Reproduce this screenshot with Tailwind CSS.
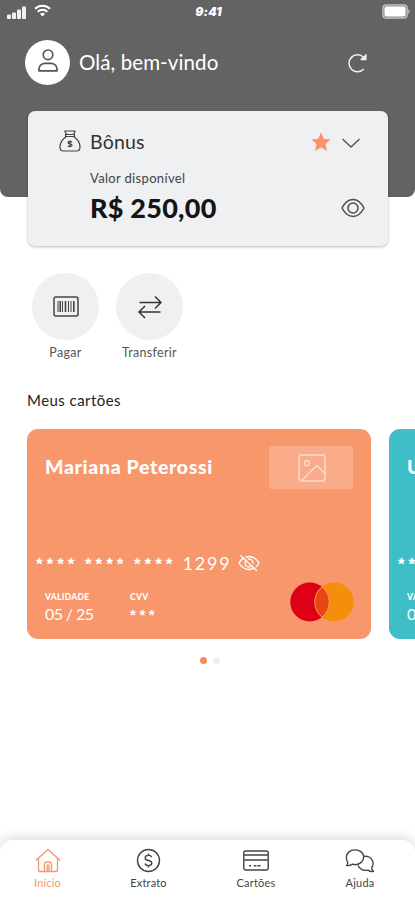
<!DOCTYPE html>
<html lang="pt-BR">
<head>
<meta charset="utf-8">
<meta name="viewport" content="width=device-width, initial-scale=1">
<title>Início</title>
<script src="https://cdn.jsdelivr.net/npm/@tailwindcss/browser@4"></script>
</head>
<body class="bg-white font-[Lato,sans-serif] text-[#333]">
<div class="flex flex-col w-[415px] h-[900px] overflow-hidden">

  <header class="h-[197px] shrink-0 rounded-b-[8px] bg-[#636363] text-white">
    <div class="grid grid-cols-3 items-center h-6 pl-[7px] pr-[5px]">
      <div class="flex items-center gap-2">
        <svg class="w-[19px] h-[13px]" viewBox="0 0 19 13" fill="#f0f0f0"><rect x="0" y="8.500" width="4" height="4.500" rx="1"/><rect x="5" y="6.500" width="4" height="6.500" rx="1"/><rect x="10" y="3.500" width="4" height="9.500" rx="1"/><rect x="15" y="0.500" width="4" height="12.500" rx="1"/></svg>
        <svg class="w-[17px] h-[13px] -mt-[3px]" viewBox="0 0 17 13" fill="none" stroke="#fff" stroke-width="2"><path d="M1 4.800a10.500 10.500 0 0 1 15 0"/><path d="M3.700 7.800a6.800 6.800 0 0 1 9.600 0"/><path d="M6 9.900a3.600 3.600 0 0 1 5 0L8.500 12.500z" fill="#fff" stroke="none"/></svg>
      </div>
      <span class="text-center text-[12px] leading-none font-black italic tracking-[0.2px] font-[Inter,sans-serif]">9:41</span>
      <svg class="justify-self-end w-[28px] h-[15px] -mt-[2px]" viewBox="0 0 28 15"><rect x="0.800" y="0.800" width="24.400" height="13.400" rx="3.500" fill="#909090" stroke="#c4c4c4" stroke-width="1.200"/><rect x="2.500" y="2.500" width="21" height="10" rx="2" fill="#fff"/><path d="M26.300 5v5q1.400-1 1.400-2.500T26.300 5" fill="#c4c4c4"/></svg>
    </div>
    <div class="flex items-center h-[45px] mt-[16px] pl-[25px] pr-[48px]">
      <div class="flex items-center justify-center size-[45px] rounded-full bg-white">
        <svg class="w-[20px] h-[23px] -mt-[5px]" viewBox="0 0 20 23" fill="none" stroke="#555" stroke-width="1.700"><circle cx="10" cy="5.800" r="4.800"/><path d="M1 21.800v-2C1 16.500 4 14.300 7 14.300h6c3 0 6 2.200 6 5.500v2z" stroke-linejoin="round"/></svg>
      </div>
      <h1 class="ml-[9px] -mt-[1px] text-[20.5px] leading-none tracking-[0.1px] whitespace-nowrap">Olá, bem-vindo</h1>
      <svg class="ml-auto w-[20px] h-[20px]" viewBox="0 0 20 20" fill="none" stroke="#f2f2f2" stroke-width="1.500"><path d="M16.800 16A8.500 8.500 0 1 1 16.500 4.200"/><path d="M18.800 1.200v5.200h-5.200"/><path d="M13.500 6.200 18.500 1.500v4.700z" fill="#f2f2f2" stroke="none"/></svg>
    </div>
  </header>

  <main class="flex flex-col -mt-[86px]">
    <section class="flex flex-col ml-[28px] mr-[27px] h-[135px] rounded-[7px] bg-[#eef0f2] pl-[31px] pr-[23px] shadow-[0_1px_3px_rgba(0,0,0,0.28)]">
      <div class="flex items-center h-[24px] mt-[19px]">
        <svg class="w-[22px] h-[22px] -mt-[2px]" viewBox="0 0 22 22" fill="none" stroke="#444" stroke-width="1.200" stroke-linejoin="round"><path d="M7.500 4.500 5.800 1h10.400L14.500 4.500M6.500 4.500h9v2h-9zM7.500 6.500C3.500 9 1 12.500 1 17c0 2.600 1.200 4 3.500 4h13c2.300 0 3.500-1.400 3.500-4 0-4.500-2.500-8-6.500-10.500"/><path d="M13 12c-1-1-4-.9-4 .6 0 1.700 4 .9 4 2.600 0 1.500-3 1.600-4.200.5M11 10.500v6.700"/></svg>
        <h2 class="ml-[9px] text-[19.5px] leading-none tracking-[0.2px]">Bônus</h2>
        <svg class="ml-auto w-[20px] h-[20px]" viewBox="0 0 20 20" fill="#f9946a"><path d="m10 .5 2.800 6.300 6.700.7-5 4.600 1.500 6.800-6-3.500-6 3.500 1.500-6.800-5-4.600 6.700-.7z"/></svg>
        <svg class="ml-[10px] mr-[4px] w-[20px] h-[12px] mt-[2px]" viewBox="0 0 20 12" fill="none" stroke="#555" stroke-width="1.500"><path d="m1.500 2 8.500 8 8.500-8"/></svg>
      </div>
      <p class="ml-[31px] mt-[16px] text-[13px] leading-[16px] tracking-[0.330px] text-[#444]">Valor disponível</p>
      <div class="flex items-center h-[30px] mt-[7px]">
        <p class="ml-[31px] -mt-[2px] text-[27px] leading-none font-black tracking-[0.250px] text-[#151515] whitespace-nowrap">R$ 250,00</p>
        <svg class="ml-auto w-[24px] h-[20px]" viewBox="0 0 24 20" fill="none" stroke="#4d4d4d" stroke-width="1.500"><path d="M1 10C4 4.300 7.500 1.500 12 1.500S20 4.300 23 10c-3 5.700-6.500 8.500-11 8.500S4 15.700 1 10z" stroke-linejoin="round"/><circle cx="12" cy="10" r="5"/></svg>
      </div>
    </section>

    <div class="flex gap-[17px] pl-[32px] mt-[27px]">
      <div class="flex flex-col items-center w-[67px]">
        <div class="flex items-center justify-center size-[67px] rounded-full bg-[#eef0f2]">
          <svg class="w-[26px] h-[21px]" viewBox="0 0 26 21" fill="none" stroke="#444"><rect x="1" y="1" width="24" height="19" rx="2" stroke-width="1.500"/><path d="M5 5v11M9.500 5v11M15.500 5v11M18 5v11" stroke-width="1"/><path d="M7.200 5v11M12.500 5v11M20.800 5v11" stroke-width="1.600"/></svg>
        </div>
        <span class="mt-[5px] text-[12.5px] leading-[16px] tracking-[0.300px] text-[#555]">Pagar</span>
      </div>
      <div class="flex flex-col items-center w-[67px]">
        <div class="flex items-center justify-center size-[67px] rounded-full bg-[#eef0f2]">
          <svg class="w-[24px] h-[24px]" viewBox="0 0 24 24" fill="none" stroke="#333" stroke-width="1.500"><path d="M1.500 7.500h21M17 1.500l6 6-6 6M22.500 17h-21M7 11l-6 6 6 6"/></svg>
        </div>
        <span class="mt-[5px] text-[12.5px] leading-[16px] tracking-[0.300px] text-[#555]">Transferir</span>
      </div>
    </div>

    <h2 class="ml-[27px] mt-[29px] text-[15px] leading-[20px] tracking-[0.450px] text-[#222]">Meus cartões</h2>

    <div class="flex gap-[18px] pl-[27px] mt-[19px] overflow-hidden">
      <article class="flex flex-col shrink-0 w-[344px] h-[210px] rounded-[11px] bg-[#f8966c] text-white">
        <div class="flex justify-between pl-[18px] pr-[18px] pt-[17px]">
          <h3 class="mt-[11px] text-[19.5px] leading-[20px] font-black tracking-[0.650px] whitespace-nowrap">Mariana Peterossi</h3>
          <div class="flex items-center justify-center w-[84px] h-[43px] rounded-[2px] bg-[#f9ab8a]">
            <svg class="w-[28px] h-[28px] ml-[2px]" viewBox="0 0 28 28" fill="none" stroke="#fddccf" stroke-width="1.500"><rect x="1" y="1" width="26" height="26" rx="3"/><ellipse cx="9" cy="9.200" rx="2.300" ry="2.600"/><path d="M4 26.500 18.700 11.500 27 19.500" stroke-linejoin="round"/></svg>
          </div>
        </div>
        <div class="flex items-center h-[20px] mt-[64px] pl-[9px]">
          <div class="flex gap-[6.500px] mt-[3px] text-[17px] leading-[20px] tracking-[4px] font-bold font-['Liberation_Sans',sans-serif]"><span>****</span><span>****</span><span>****</span></div>
          <span class="ml-[6px] text-[18px] leading-none tracking-[1.800px]">1299</span>
          <svg class="ml-[7px] w-[22px] h-[18px]" viewBox="0 0 22 18" fill="none" stroke="#fff" stroke-width="1.300"><path d="M1 9c2.500-4.500 6-6.500 10-6.500S18.500 4.500 21 9c-2.500 4.500-6 6.500-10 6.500S3.500 13.500 1 9z"/><circle cx="11" cy="9" r="4"/><path d="M3.500 .5l16.500 15" stroke="#f8966c" stroke-width="1.300"/><path d="M2.500 1.500l16.500 15.500"/></svg>
        </div>
        <div class="flex pl-[18px] pr-[17px] mt-[9px]">
          <div class="w-[85px] pt-[10px]">
            <p class="text-[8.5px] leading-[10px] font-black tracking-[0.300px]">VALIDADE</p>
            <p class="mt-[3px] text-[16px] leading-[18px] tracking-[-0.600px]">05 / 25</p>
          </div>
          <div class="pt-[10px]">
            <p class="text-[8.5px] leading-[10px] font-black tracking-[0.300px]">CVV</p>
            <p class="mt-[4px] text-[15px] leading-[18px] tracking-[3.600px] font-bold font-['Liberation_Sans',sans-serif]">***</p>
          </div>
          <svg class="ml-auto w-[64px] h-[40px]" viewBox="0 0 64 40"><circle cx="19.800" cy="20" r="19.500" fill="#de0017"/><circle cx="44.200" cy="20" r="19.500" fill="#f58e0b"/><path d="M32 4.800a19.500 19.500 0 0 1 0 30.400 19.500 19.500 0 0 1 0-30.400" fill="#e64710" stroke="#f8966c"/></svg>
        </div>
      </article>

      <article class="flex flex-col shrink-0 w-[344px] h-[210px] rounded-[11px] bg-[#40bec8] text-white">
        <div class="pl-[18px] pt-[17px]">
          <h3 class="mt-[11px] h-[32px] text-[19.500px] leading-[20px] font-black">U</h3>
        </div>
        <div class="flex items-center h-[20px] mt-[64px] pl-[9px]">
          <span class="mt-[3px] text-[17px] leading-[20px] tracking-[4px] font-bold font-['Liberation_Sans',sans-serif]">****</span>
        </div>
        <div class="pl-[18px] mt-[19px]">
          <p class="text-[8.5px] leading-[10px] font-black tracking-[0.300px]">VALIDADE</p>
          <p class="mt-[3px] text-[16px] leading-[18px] tracking-[-0.600px]">05 / 25</p>
        </div>
      </article>
    </div>

    <div class="flex justify-center gap-[6px] mt-[18px] pl-[4px]">
      <span class="size-[7px] rounded-full bg-[#f88b60]"></span>
      <span class="size-[7px] rounded-full bg-[#eeeeee]"></span>
    </div>
  </main>

  <nav class="grid grid-cols-[95px_107px_108px_100px] h-[60px] mt-auto shrink-0 rounded-t-[12px] bg-white text-[#444] text-[11px] leading-[14px] tracking-[0.200px] shadow-[0_-2px_12px_rgba(0,0,0,0.16)]">
    <a class="flex flex-col items-center pt-[8px] text-[#f8966c]">
      <svg class="w-[26px] h-[25px]" viewBox="0 0 26 25" fill="none" stroke="currentColor" stroke-width="1.300" stroke-linejoin="round"><path d="M.8 12.500 13 1.500l12.200 11"/><path d="M3.500 10.500V22.500q0 1 1 1h17q1 0 1-1V10.500"/><path d="M9.500 23.500v-7q0-2.500 2.500-2.500h2q2.500 0 2.500 2.500v7M12.200 23.500v-6.300h1.700v6.300"/></svg>
      <span class="mt-[3px]">Início</span>
    </a>
    <a class="flex flex-col items-center pt-[8px]">
      <svg class="w-[25px] h-[25px]" viewBox="0 0 25 25" fill="none" stroke="currentColor" stroke-width="1.400"><circle cx="12.500" cy="12.500" r="11"/><path d="M15.800 9.300c-.5-1.300-1.700-1.900-3.300-1.900-2 0-3.300 1-3.300 2.500 0 3.400 6.600 1.700 6.600 5.200 0 1.500-1.400 2.500-3.300 2.500-1.800 0-3-.7-3.400-2.100M12.500 5.500v2M12.500 17.500v2"/></svg>
      <span class="mt-[3px]">Extrato</span>
    </a>
    <a class="flex flex-col items-center pt-[8px]">
      <svg class="w-[26px] h-[25px]" viewBox="0 0 26 25" fill="none" stroke="currentColor" stroke-width="1.400"><rect x=".8" y="3" width="24.400" height="19" rx="2"/><path d="M1 7h24M1 12h24M6 17.800h2M11 17.800h2.500M14.500 17.800h3"/></svg>
      <span class="mt-[3px]">Cartões</span>
    </a>
    <a class="flex flex-col items-center pt-[8px]">
      <svg class="w-[30px] h-[25px]" viewBox="0 0 30 25" fill="none" stroke="currentColor" stroke-width="1.400" stroke-linejoin="round"><path d="M1.500 17.500c1-.8 1.500-2 1.300-3.200C.5 11 1 6.500 4 3.900c3.200-2.700 9-2.700 12.200 0 3.300 2.800 3.300 7.700 0 10.500-2.500 2.200-5.800 2.700-8.700 1.800-1.800 1.200-4 1.700-6 1.300z"/><path d="M18.800 8.300c3.700-.5 7.400 1.300 8.700 4.400 1 2.300.7 4.800-.8 6.800-.1 1.600.5 2.900 1.800 3.900-2 .5-4-.1-5.600-1.300-4.300 1-8.500-.9-9.900-4.600"/></svg>
      <span class="mt-[3px]">Ajuda</span>
    </a>
  </nav>
</div>
</body>
</html>
